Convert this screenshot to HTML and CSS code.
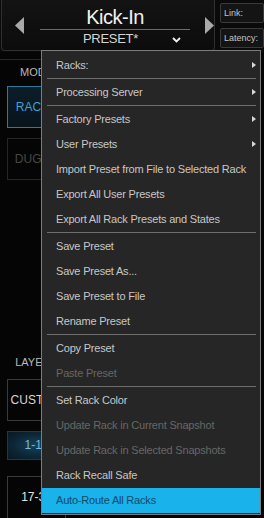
FILE: index.html
```html
<!DOCTYPE html>
<html lang="en">
<head>
    <meta charset="UTF-8">
    <title>Rack Preset Menu</title>
    <link rel="stylesheet" href="styles.css">
</head>
<body>
    <div class="app">
        <header class="topbar">
            <div class="title-frame">
                <svg class="nav-arrow" width="9" height="17" viewBox="0 0 9 17"><polygon points="9,0 9,17 0,8.5" fill="#a9a9a9"/></svg>
                <div class="title-block">
                    <div class="rack-name">Kick-In</div>
                    <div class="preset-row">
                        <span class="preset-label">PRESET*</span>
                        <svg class="chevron" width="9" height="6" viewBox="0 0 9 6"><polyline points="1,1 4.5,4.5 8,1" fill="none" stroke="#f0f0f0" stroke-width="1.8"/></svg>
                    </div>
                </div>
                <svg class="nav-arrow" width="9" height="17" viewBox="0 0 9 17"><polygon points="0,0 0,17 9,8.5" fill="#a9a9a9"/></svg>
            </div>
            <div class="status">
                <div class="status-box">Link:</div>
                <div class="status-box">Latency:</div>
            </div>
        </header>

        <!-- the right part of the sidebar sits under the menu -->
        <aside class="sidebar">
            <div class="divider"></div>
            <div class="section-label">MODE</div>
            <div class="side-btn active">RACKS</div>
            <div class="side-btn dim">DUGAN</div>

            <div class="section-label layers">LAYERS</div>
            <div class="side-btn plain">CUSTOM</div>
            <div class="side-btn bank glow">1-16</div>
            <div class="side-btn bank tall">17-32</div>
        </aside>

        <div class="menu">
            <div class="item sub">Racks:</div>
            <div class="sep"></div>
            <div class="item sub">Processing Server</div>
            <div class="sep"></div>
            <div class="item sub">Factory Presets</div>
            <div class="item sub">User Presets</div>
            <div class="item">Import Preset from File to Selected Rack</div>
            <div class="item">Export All User Presets</div>
            <div class="item">Export All Rack Presets and States</div>
            <div class="sep"></div>
            <div class="item">Save Preset</div>
            <div class="item">Save Preset As...</div>
            <div class="item">Save Preset to File</div>
            <div class="item">Rename Preset</div>
            <div class="sep"></div>
            <div class="item">Copy Preset</div>
            <div class="item disabled">Paste Preset</div>
            <div class="sep"></div>
            <div class="item">Set Rack Color</div>
            <div class="item disabled">Update Rack in Current Snapshot</div>
            <div class="item disabled">Update Rack in Selected Snapshots</div>
            <div class="item">Rack Recall Safe</div>
            <div class="item selected">Auto-Route All Racks</div>
        </div>
    </div>
</body>
</html>
```

FILE: styles.css
```css
body {
    margin: 0;
    background: #050505;
    font-family: 'Liberation Sans', Arial, sans-serif;
    width: 264px;
    height: 518px;
    overflow: hidden;
}
.app {
    position: relative;
    height: 518px;
}

/* top bar */
.topbar {
    display: flex;
    height: 52px;
    background: #0a0a0a;
}
.title-frame {
    display: flex;
    align-items: flex-start;
    width: 223px;
    margin-left: 1px;
    height: 51px;
    box-sizing: border-box;
    border: 1px solid #303030;
    border-top: none;
    border-radius: 0 0 4px 4px;
    background: linear-gradient(#131313, #0c0c0c);
}
.nav-arrow {
    margin-top: 17px;
    margin-left: 13px;
}
.nav-arrow:last-child {
    margin-left: 15px;
}
.title-block {
    width: 150px;
    margin-left: 16px;
}
.rack-name {
    color: #f2f2f2;
    font-size: 20px;
    letter-spacing: -0.5px;
    text-align: center;
    height: 30px;
    line-height: 30px;
    box-sizing: border-box;
    padding-top: 2px;
    border-bottom: 1px solid #6a6a6a;
}
.preset-row {
    display: flex;
    align-items: center;
    padding-left: 43px;
    height: 17px;
}
.preset-label {
    color: #d4d4d4;
    font-size: 13px;
    letter-spacing: -0.3px;
    width: 89px;
}
.chevron {
    margin-top: 3px;
}
.status {
    display: flex;
    flex-direction: column;
    gap: 5px;
    margin-left: 5px;
    padding-top: 3px;
}
.status-box {
    width: 44px;
    height: 20px;
    box-sizing: border-box;
    border: 1px solid #3a3a3a;
    border-radius: 2px;
    background: #141414;
    color: #c4c4c4;
    font-size: 9px;
    line-height: 18px;
    padding-left: 3px;
}

/* sidebar */
.sidebar {
    width: 73px;
}
.divider {
    height: 1px;
    margin-top: 7px;
    background: #262626;
}
.section-label {
    color: #b8b8b8;
    font-size: 11px;
    text-align: center;
    line-height: 13px;
    margin-top: 6px;
}
.section-label.layers {
    margin-top: 176px;
}
.side-btn {
    margin: 7px 7px 0;
    height: 42px;
    box-sizing: border-box;
    border: 1px solid #2c2c2c;
    text-align: center;
    line-height: 40px;
    font-size: 12px;
    color: #d6d6d6;
}
.side-btn + .side-btn {
    margin-top: 10px;
}
.side-btn.active {
    border-color: #2a7aa0;
    background: linear-gradient(#0c1d29, #08141c);
    color: #3e9fd0;
}
.side-btn.dim {
    color: #474747;
    border-color: #262626;
}
.section-label + .side-btn.plain {
    margin-top: 10px;
    border-color: #3a3a3a;
}
.side-btn.glow {
    height: 29px;
    line-height: 27px;
    border-color: #173a50;
    background: radial-gradient(ellipse at center, #17435c 0%, #0c2535 60%, #081822 100%);
    color: #7ab8dc;
}
.side-btn.tall {
    margin-top: 16px;
    height: 60px;
    line-height: 40px;
    border-color: #3a3a3a;
    color: #e4e4e4;
}

/* context menu */
.menu {
    position: absolute;
    left: 41px;
    top: 50px;
    width: 220px;
    box-sizing: border-box;
    border: 1px solid #7c7c7c;
    background: #262626;
    padding: 2px 0 1px;
}
.item {
    position: relative;
    height: 25px;
    line-height: 25px;
    padding-left: 14px;
    color: #c6c6c6;
    font-size: 11px;
    letter-spacing: -0.2px;
    white-space: nowrap;
}
.item.disabled {
    color: #676767;
}
.item.selected {
    background: #19b2ea;
    color: #0f4a6a;
}
.item.sub::after {
    content: "";
    position: absolute;
    right: 4px;
    top: 9px;
    border-left: 4px solid #d8d8d8;
    border-top: 3.5px solid transparent;
    border-bottom: 3.5px solid transparent;
}
.sep {
    height: 1px;
    margin: 0 4px 1px 5px;
    background: #6e6e6e;
}
```
